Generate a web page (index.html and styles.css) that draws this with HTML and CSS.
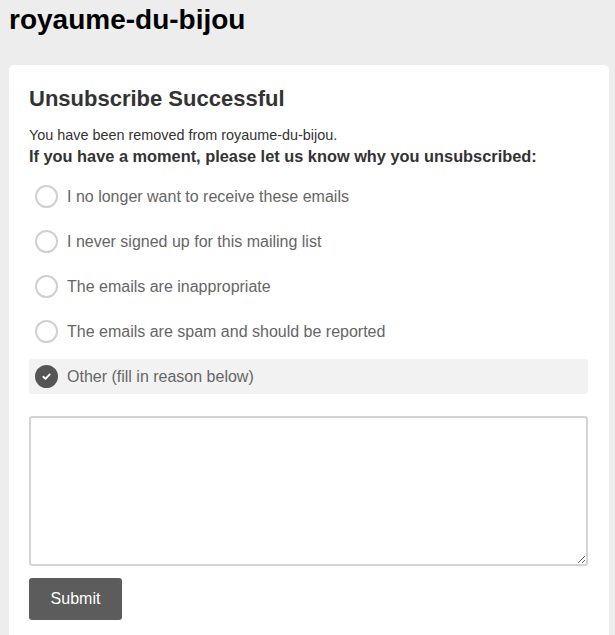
FILE: index.html
```html
<!DOCTYPE html>
<html lang="en">
<head>
    <meta charset="UTF-8">
    <meta name="viewport" content="width=device-width, initial-scale=1.0">
    <title>Unsubscribe</title>
    <link rel="stylesheet" href="styles.css">
</head>
<body>

    <h1 class="site-name">royaume-du-bijou</h1>

    <div class="card">
        <h2>Unsubscribe Successful</h2>
        <p class="removed">You have been removed from royaume-du-bijou.</p>
        <p class="question">If you have a moment, please let us know why you unsubscribed:</p>

        <form id="reasonForm">
            <label class="option">
                <input type="radio" name="reason" value="no-longer">
                <span class="circle"></span>
                <span>I no longer want to receive these emails</span>
            </label>
            <label class="option">
                <input type="radio" name="reason" value="never-signed">
                <span class="circle"></span>
                <span>I never signed up for this mailing list</span>
            </label>
            <label class="option">
                <input type="radio" name="reason" value="inappropriate">
                <span class="circle"></span>
                <span>The emails are inappropriate</span>
            </label>
            <label class="option">
                <input type="radio" name="reason" value="spam">
                <span class="circle"></span>
                <span>The emails are spam and should be reported</span>
            </label>
            <label class="option">
                <input type="radio" name="reason" value="other" checked>
                <span class="circle">
                    <svg viewBox="0 0 12 12" width="11" height="11"><path d="M2.5 6.3 L4.9 8.5 L9.5 3.7" fill="none" stroke="#fff" stroke-width="2" stroke-linecap="round" stroke-linejoin="round"/></svg>
                </span>
                <span>Other (fill in reason below)</span>
            </label>

            <textarea id="otherReason" name="otherReason"></textarea>

            <button type="submit">Submit</button>
        </form>
    </div>

</body>
</html>
```

FILE: styles.css
```css
body {
    font-family: "Liberation Sans", Arial, sans-serif;
    background-color: #ededed;
    color: #333;
    margin: 0;
    padding: 4px 6px 0 9px;
}

.site-name {
    font-size: 28px;
    color: #000;
    margin: 0 0 29px 0;
    line-height: 32px;
}

.card {
    background-color: #fff;
    border-radius: 5px;
    padding: 20px 21px 20px 20px;
    width: 559px;
}

h2 {
    font-size: 22px;
    color: #333;
    margin: 1px 0 15px 0;
    line-height: 26px;
}

.removed {
    font-size: 14.4px;
    margin: 0;
    line-height: 16px;
}

.question {
    font-size: 16.35px;
    font-weight: bold;
    margin: 4px 0 14px 0;
    line-height: 18px;
}

.option {
    display: flex;
    align-items: center;
    gap: 9px;
    height: 35px;
    padding-left: 6px;
    margin-bottom: 10px;
    border-radius: 3px;
    font-size: 16px;
    color: #666;
    cursor: pointer;
}

.option input {
    display: none;
}

.circle {
    width: 19px;
    height: 19px;
    border: 2px solid #d0d0d0;
    border-radius: 50%;
    display: flex;
    align-items: center;
    justify-content: center;
}

.option:has(input:checked) {
    background-color: #f2f2f2;
}

.option input:checked + .circle {
    background-color: #555;
    border-color: #555;
}

textarea {
    display: block;
    width: 100%;
    height: 150px;
    margin-top: 22px;
    border: 2px solid #d3d3d3;
    border-radius: 3px;
    box-sizing: border-box;
    outline: none;
    font-family: inherit;
    font-size: 14px;
}

button {
    margin-top: 12px;
    width: 93px;
    height: 42px;
    background-color: #5c5c5c;
    color: #fff;
    border: none;
    border-radius: 3px;
    font-family: inherit;
    font-size: 16px;
    cursor: pointer;
}
```
